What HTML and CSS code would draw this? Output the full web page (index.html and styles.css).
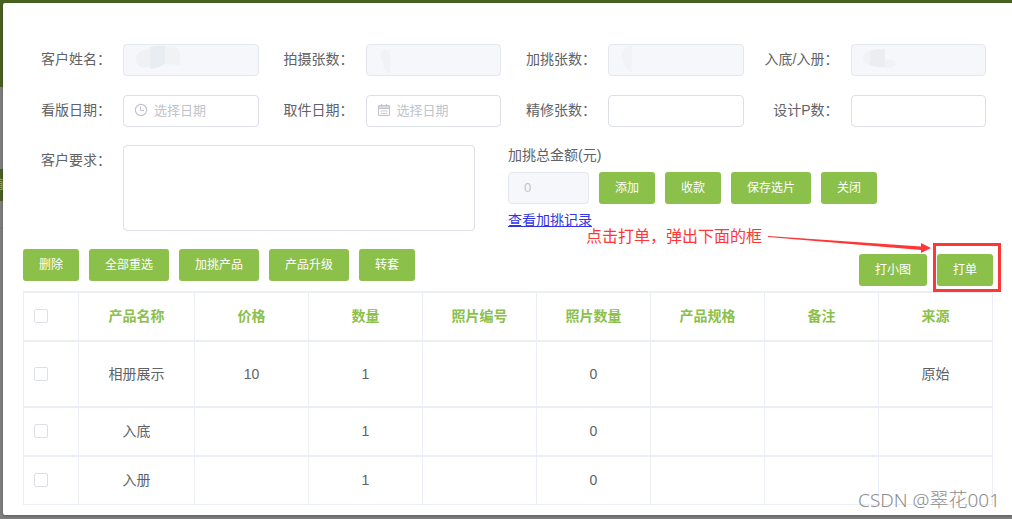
FILE: index.html
```html
<!DOCTYPE html>
<html lang="zh-CN">
<head>
<meta charset="utf-8">
<title>选片</title>
<link rel="stylesheet" href="styles.css">
</head>
<body>
<div class="backdrop" aria-hidden="true">
  <div class="backdrop-header"></div>
  <div class="backdrop-panel"></div>
  <div class="backdrop-bar"><span class="backdrop-text">值</span></div>
  <div class="backdrop-list"></div>
</div>
<main class="dialog">
  <form class="form">
    <div class="fields">
      <div class="field"><label for="name">客户姓名：</label>
        <div class="control"><input id="name" disabled>
          <svg class="smudge" width="60" height="30" viewBox="0 0 60 30"><path d="M13 13Q14 6 27 5V22L20 24Q12 22 13 13Z" fill="#eff1f5"/><path d="M27 3Q35 1 42 2V20Q36 24 27 25Z" fill="#e9ecf1"/><path d="M42 2Q56 2 57 8V21L42 20Z" fill="#f0f2f6"/></svg>
        </div></div>
      <div class="field"><label for="shots">拍摄张数：</label>
        <div class="control"><input id="shots" disabled>
          <svg class="smudge" width="60" height="30" viewBox="0 0 60 30"><path d="M15 8Q19 4 24 7V29Q18 29 17 20L15 14Z" fill="#f0f2f6"/></svg>
        </div></div>
      <div class="field"><label for="extra">加挑张数：</label>
        <div class="control"><input id="extra" disabled>
          <svg class="smudge" width="60" height="30" viewBox="0 0 60 30"><path d="M14 8Q17 3 24 2V28Q18 27 17 20Q13 18 14 8Z" fill="#f1f3f7"/></svg>
        </div></div>
      <div class="field"><label for="album">入底/入册：</label>
        <div class="control"><input id="album" disabled>
          <svg class="smudge" width="60" height="30" viewBox="0 0 60 30"><path d="M12 14Q13 8 19 7V21Q12 20 12 14ZM34 16Q44 15 45 20Q42 25 34 24Z" fill="#f0f2f6"/><path d="M19 7Q24 5 34 5V23Q24 24 19 21Z" fill="#ebedf2"/></svg>
        </div></div>
      <div class="field"><label for="proof">看版日期：</label>
        <div class="control"><input id="proof" class="with-icon" placeholder="选择日期">
          <svg class="icon" width="14" height="14" viewBox="0 0 14 14" fill="none" stroke="#c0c4cc"><circle cx="7" cy="7" r="5.6" stroke-width="1.2"/><path d="M6.500 3.500V7.500H10"/></svg>
        </div></div>
      <div class="field"><label for="pickup">取件日期：</label>
        <div class="control"><input id="pickup" class="with-icon" placeholder="选择日期">
          <svg class="icon" width="14" height="14" viewBox="0 0 14 14" fill="none" stroke="#c0c4cc"><path d="M1.500 2.500H12.500V12.500H1.500Z"/><path d="M1 4H13" stroke-width="3" stroke-opacity=".6"/><path d="M4.500 1V4M9.500 1V4M1.500 5.500H12.500"/><path d="M3.500 8H10.500M3.500 10.500H10.500" stroke-dasharray="2 .5"/></svg>
        </div></div>
      <div class="field"><label for="retouch">精修张数：</label>
        <div class="control"><input id="retouch"></div></div>
      <div class="field"><label for="pages">设计P数：</label>
        <div class="control"><input id="pages"></div></div>
    </div>
    <div class="details">
      <div class="request"><label for="request">客户要求：</label><textarea id="request"></textarea></div>
      <div class="payment">
        <label for="total">加挑总金额(元)</label>
        <div class="actions">
          <input id="total" class="total" value="0" disabled>
          <button type="button">添加</button>
          <button type="button">收款</button>
          <button type="button">保存选片</button>
          <button type="button">关闭</button>
        </div>
        <a href="#records">查看加挑记录</a>
      </div>
    </div>
  </form>
  <div class="toolbar">
    <div class="actions">
      <button type="button">删除</button>
      <button type="button">全部重选</button>
      <button type="button">加挑产品</button>
      <button type="button">产品升级</button>
      <button type="button">转套</button>
    </div>
    <div class="actions print">
      <button type="button">打小图</button>
      <button type="button">打单</button>
      <span class="note">点击打单，弹出下面的框</span>
      <svg class="arrow" width="164" height="24" viewBox="0 0 164 24" fill="#ff3636"><path d="M0 4L153 14.500L153 11L163 16L153 21L153 18L0 5Z"/></svg>
      <span class="frame"></span>
    </div>
  </div>
  <table class="products">
    <colgroup><col class="col-check"><col class="col-name"><col><col><col><col><col><col><col></colgroup>
    <thead>
      <tr><th><input type="checkbox" aria-label="全选"></th><th>产品名称</th><th>价格</th><th>数量</th><th>照片编号</th><th>照片数量</th><th>产品规格</th><th>备注</th><th>来源</th></tr>
    </thead>
    <tbody>
      <tr class="tall"><td><input type="checkbox" aria-label="相册展示"></td><td>相册展示</td><td>10</td><td>1</td><td></td><td>0</td><td></td><td></td><td>原始</td></tr>
      <tr><td><input type="checkbox" aria-label="入底"></td><td>入底</td><td></td><td>1</td><td></td><td>0</td><td></td><td></td><td></td></tr>
      <tr><td><input type="checkbox" aria-label="入册"></td><td>入册</td><td></td><td>1</td><td></td><td>0</td><td></td><td></td><td></td></tr>
    </tbody>
  </table>
  <div class="watermark">CSDN @翠花001</div>
</main>
</body>
</html>
```
FILE: styles.css
```css
* { box-sizing: border-box; }

body {
  margin: 0;
  padding: 3px 0 4px 3px;
  background: #7f7f7f;
  color: #606266;
  font: 14px/20px "Liberation Sans", "Noto Sans CJK SC", sans-serif;
}

.backdrop {
  position: absolute;
  inset: 0;
  overflow: hidden;
}
.backdrop-header { height: 87px; background: #486222; }
.backdrop-panel { height: 82px; }
.backdrop-bar {
  display: flex;
  align-items: center;
  height: 32px;
  background: #486222;
}
.backdrop-text { margin-left: -8px; color: #a0a0a0; font-size: 12px; }
.backdrop-list { height: 27px; border-bottom: 1px solid #757678; }

.dialog {
  position: relative;
  padding: 41px 19px 10px 20px;
  background: #fff;
  border-radius: 2px 0 0 2px;
  box-shadow: 0 1px 3px rgba(0, 0, 0, .3);
}

.fields {
  display: grid;
  grid-template-columns: repeat(4, 1fr);
  row-gap: 19px;
}
.field { display: flex; padding-right: 7px; }
.field label, .request label {
  flex: 0 0 100px;
  padding-right: 12px;
  line-height: 30px;
  text-align: right;
  white-space: nowrap;
}
.control { position: relative; flex: 1; min-width: 0; }

input, textarea, button { font-family: inherit; }

.control input, .total, textarea {
  display: block;
  width: 100%;
  height: 32px;
  margin: 0;
  padding: 0 15px 2px;
  border: 1px solid #dcdfe6;
  border-radius: 4px;
  background: #fff;
  color: #606266;
  font-size: 13px;
}
.control .with-icon { padding-left: 30px; }
.control input:disabled, .total:disabled {
  border-color: #e4e7ed;
  background: #f5f7fa;
  color: #c0c4cc;
}
::placeholder { color: #c0c4cc; opacity: 1; }

.icon { position: absolute; left: 11px; top: 8px; }
.smudge { position: absolute; left: 0; top: 0; }

.details {
  display: grid;
  grid-template-columns: 1fr 1fr;
  margin-top: 18px;
}
.request { display: flex; padding-right: 33px; }
.request textarea { flex: 1; min-width: 0; height: 86px; resize: none; }

.payment { display: flex; flex-direction: column; align-items: flex-start; }
.payment .actions { margin: 7px 0 6px; }
.payment a { color: #3333e6; }
.actions { display: flex; gap: 10px; }
.actions .total { width: 81px; }

button {
  height: 32px;
  padding: 0 16px;
  border: 0;
  border-radius: 3px;
  background: #8bc04a;
  color: #fff;
  font-size: 12px;
  line-height: 30px;
  font-weight: 400;
  white-space: nowrap;
}

.toolbar {
  display: flex;
  justify-content: space-between;
  align-items: flex-start;
  margin-top: 18px;
  padding-bottom: 5px;
}
.print { position: relative; margin-top: 5px; }

.note {
  position: absolute;
  right: 231px;
  top: -29px;
  color: #ff3636;
  font-size: 16px;
  line-height: 24px;
  white-space: nowrap;
}
.arrow { position: absolute; right: 61px; top: -22px; }
.frame {
  position: absolute;
  right: -8px;
  top: -11px;
  width: 68px;
  height: 49px;
  border: 3px solid #ff3636;
  pointer-events: none;
}

.products {
  width: 100%;
  table-layout: fixed;
  border-collapse: separate;
  border-spacing: 0;
  border-top: 2px solid #ebeef5;
  border-left: 1px solid #ebeef5;
}
.col-check { width: 55px; }
.col-name { width: 116px; }
.products th, .products td {
  height: 49px;
  padding: 0 10px 2px;
  border-right: 1px solid #ebeef5;
  border-bottom: 2px solid #ebeef5;
  text-align: center;
}
.products th { color: #8bc04a; font-weight: 700; }
.products .tall td { height: 66px; padding-bottom: 0; }
.products tr:last-child td { height: 48px; border-bottom-width: 1px; }
.products th:first-child, .products td:first-child { text-align: left; }

input[type="checkbox"] {
  display: block;
  appearance: none;
  width: 14px;
  height: 14px;
  margin: 0;
  border: 1px solid #dcdfe6;
  border-radius: 2px;
  background: #fff;
}

.watermark {
  position: absolute;
  right: 12px;
  bottom: 3px;
  color: #8c8c8c;
  font: 19px/24px "Noto Sans", "Noto Sans CJK SC", sans-serif;
  font-weight: 300;
  text-shadow: 1px 1px 0 #fff;
}
```
